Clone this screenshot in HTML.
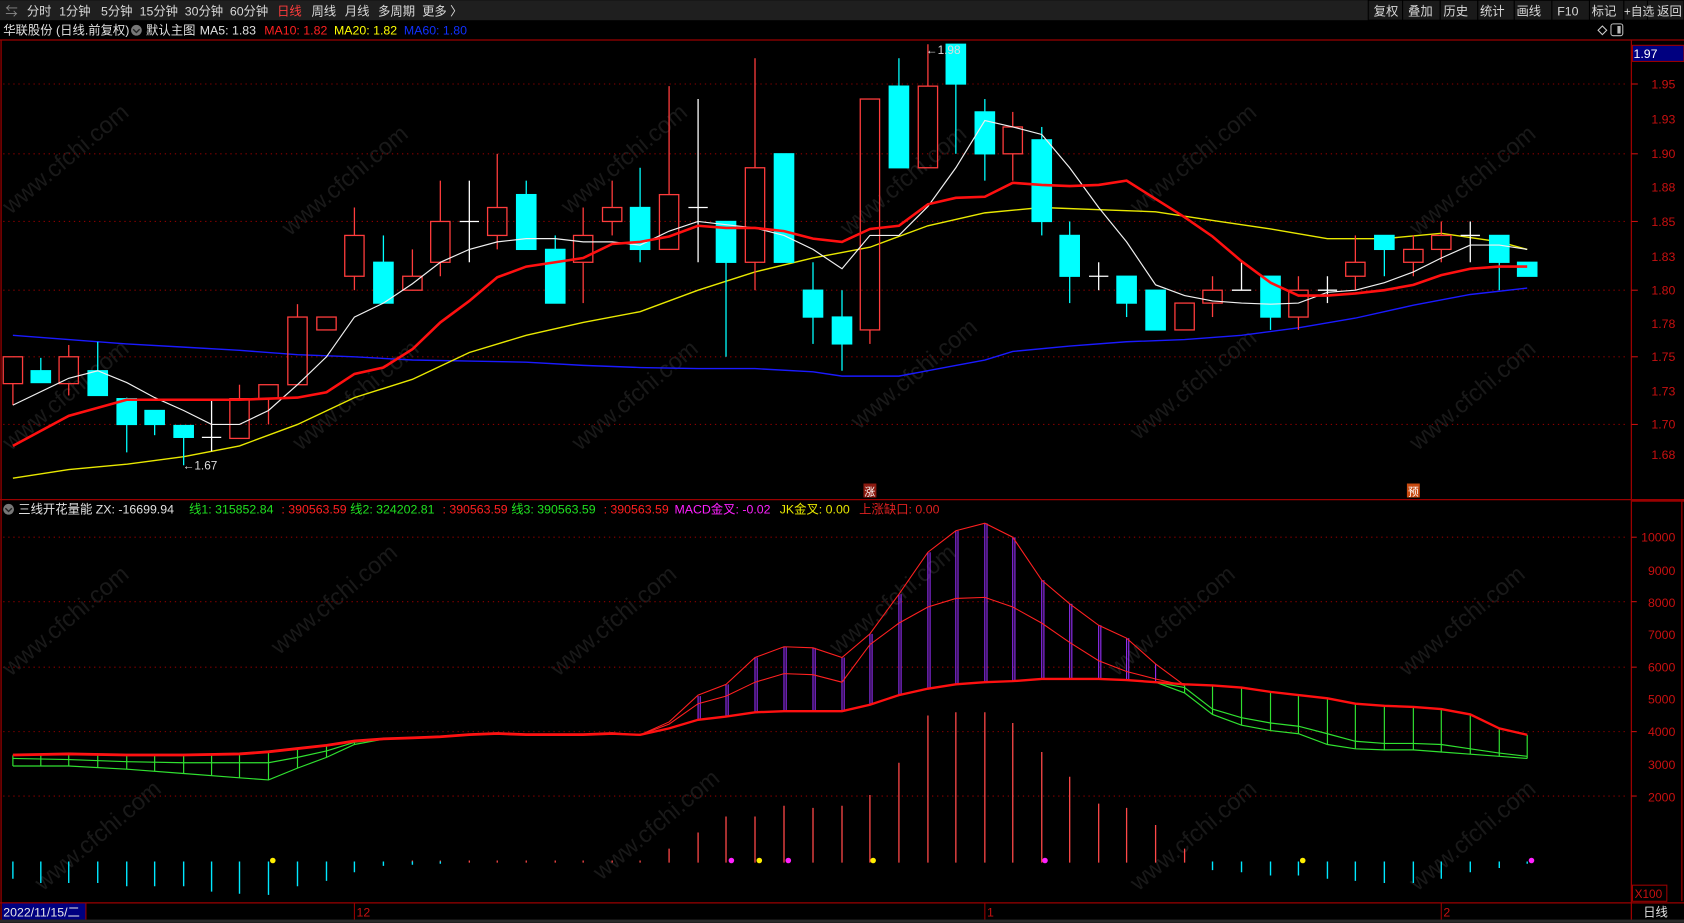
<!DOCTYPE html>
<html><head><meta charset="utf-8"><style>
html,body{margin:0;padding:0;background:#000;width:1684px;height:923px;overflow:hidden}
svg{display:block}
text{font-family:"Liberation Sans","Noto Sans CJK SC",sans-serif}
</style></head><body>
<svg width="1684" height="923" viewBox="0 0 1568 859" xmlns="http://www.w3.org/2000/svg">
<rect width="1568" height="859" fill="#000"/>
<g fill="#191919" font-size="22" font-family="Liberation Sans,sans-serif">
<text transform="translate(10,200) rotate(-40)">www.cfchi.com</text>
<text transform="translate(270,220) rotate(-40)">www.cfchi.com</text>
<text transform="translate(530,200) rotate(-40)">www.cfchi.com</text>
<text transform="translate(790,220) rotate(-40)">www.cfchi.com</text>
<text transform="translate(1060,200) rotate(-40)">www.cfchi.com</text>
<text transform="translate(1320,220) rotate(-40)">www.cfchi.com</text>
<text transform="translate(10,420) rotate(-40)">www.cfchi.com</text>
<text transform="translate(280,420) rotate(-40)">www.cfchi.com</text>
<text transform="translate(540,420) rotate(-40)">www.cfchi.com</text>
<text transform="translate(800,400) rotate(-40)">www.cfchi.com</text>
<text transform="translate(1060,410) rotate(-40)">www.cfchi.com</text>
<text transform="translate(1320,420) rotate(-40)">www.cfchi.com</text>
<text transform="translate(10,630) rotate(-40)">www.cfchi.com</text>
<text transform="translate(260,610) rotate(-40)">www.cfchi.com</text>
<text transform="translate(520,630) rotate(-40)">www.cfchi.com</text>
<text transform="translate(780,610) rotate(-40)">www.cfchi.com</text>
<text transform="translate(1040,630) rotate(-40)">www.cfchi.com</text>
<text transform="translate(1310,630) rotate(-40)">www.cfchi.com</text>
<text transform="translate(40,830) rotate(-40)">www.cfchi.com</text>
<text transform="translate(560,820) rotate(-40)">www.cfchi.com</text>
<text transform="translate(1060,830) rotate(-40)">www.cfchi.com</text>
<text transform="translate(1320,830) rotate(-40)">www.cfchi.com</text>
</g>
<rect x="0" y="0" width="1568" height="18.6" fill="#1f1f1f"/>
<g fill="#d8d8d8" font-size="11.5">
<text x="5" y="14" fill="#888">⇆</text>
<text x="25" y="14">分时</text><text x="55" y="14">1分钟</text><text x="94" y="14">5分钟</text>
<text x="130" y="14">15分钟</text><text x="172" y="14">30分钟</text><text x="214" y="14">60分钟</text>
<text x="258" y="14" fill="#ff3c3c">日线</text><text x="290" y="14">周线</text><text x="321" y="14">月线</text>
<text x="352" y="14">多周期</text><text x="393" y="14">更多 〉</text>
</g>
<g fill="#1a1a1a" stroke="#000" stroke-width="1">
<rect x="1274" y="0" width="32" height="18.6"/><rect x="1306" y="0" width="35" height="18.6"/>
<rect x="1341" y="0" width="35" height="18.6"/><rect x="1376" y="0" width="34" height="18.6"/>
<rect x="1410" y="0" width="35" height="18.6"/><rect x="1445" y="0" width="35" height="18.6"/>
<rect x="1480" y="0" width="32" height="18.6"/><rect x="1512" y="0" width="22" height="18.6"/><rect x="1534" y="0" width="34" height="18.6"/>
</g>
<g fill="#d8d8d8" font-size="11.5">
<text x="1279" y="14">复权</text><text x="1311" y="14">叠加</text><text x="1344" y="14">历史</text>
<text x="1378" y="14">统计</text><text x="1412" y="14">画线</text><text x="1450" y="14">F10</text>
<text x="1482" y="14">标记</text><text x="1512" y="14" font-size="11">+自选</text><text x="1543" y="14">返回</text>
</g>
<g font-size="11.5">
<text x="3" y="32" fill="#e0e0e0">华联股份 (日线.前复权)</text>
<circle cx="127" cy="28" r="5" fill="#777"/><path d="M124 27 L127 30 L130 27" stroke="#222" fill="none" stroke-width="1.3"/>
<text x="136" y="32" fill="#e0e0e0">默认主图</text>
<text x="186" y="32" fill="#e0e0e0">MA5: 1.83</text>
<text x="246" y="32" fill="#ff2020">MA10: 1.82</text>
<text x="311" y="32" fill="#ffff00">MA20: 1.82</text>
<text x="376" y="32" fill="#1030ff">MA60: 1.80</text>
</g>
<path d="M1492 24 L1496 28 L1492 32 L1488 28Z" stroke="#ccc" fill="none"/>
<rect x="1500" y="22" width="11" height="11" rx="2" stroke="#bbb" fill="none"/><rect x="1506" y="24" width="3" height="7" fill="#bbb"/>
<g stroke="#9a0000" stroke-width="1.2" fill="none">
<line x1="0" y1="37" x2="1568" y2="37"/>
<line x1="1519" y1="37" x2="1519" y2="856"/>
<line x1="0" y1="465" x2="1568" y2="465"/>
<line x1="0" y1="840.5" x2="1568" y2="840.5"/>
<line x1="1" y1="37" x2="1" y2="856"/>
<line x1="1519" y1="466" x2="1568" y2="466" stroke-width="2"/>
<line x1="1566" y1="466" x2="1566" y2="839"/>
</g>
<g stroke="#8a0000" stroke-width="1" stroke-dasharray="1.2 3.5">
<line x1="3" y1="78" x2="1516" y2="78"/><line x1="3" y1="143" x2="1516" y2="143"/>
<line x1="3" y1="206" x2="1516" y2="206"/><line x1="3" y1="270" x2="1516" y2="270"/>
<line x1="3" y1="332" x2="1516" y2="332"/><line x1="3" y1="395" x2="1516" y2="395"/>
<line x1="3" y1="500" x2="1516" y2="500"/><line x1="3" y1="560" x2="1516" y2="560"/>
<line x1="3" y1="621" x2="1516" y2="621"/><line x1="3" y1="681" x2="1516" y2="681"/>
<line x1="3" y1="741" x2="1516" y2="741"/>
</g>
<g fill="#c81010" font-size="11.5" text-anchor="end">
<text x="1560" y="82">1.95</text><text x="1560" y="115">1.93</text><text x="1560" y="147">1.90</text>
<text x="1560" y="178">1.88</text><text x="1560" y="210">1.85</text><text x="1560" y="243">1.83</text>
<text x="1560" y="274">1.80</text><text x="1560" y="305">1.78</text><text x="1560" y="336">1.75</text>
<text x="1560" y="368">1.73</text><text x="1560" y="399">1.70</text><text x="1560" y="427">1.68</text>
<text x="1560" y="504">10000</text><text x="1560" y="535">9000</text><text x="1560" y="565">8000</text>
<text x="1560" y="595">7000</text><text x="1560" y="625">6000</text><text x="1560" y="655">5000</text>
<text x="1560" y="685">4000</text><text x="1560" y="716">3000</text><text x="1560" y="746">2000</text>
</g>
<g stroke="#c81010"><line x1="1519" y1="78" x2="1525" y2="78"/><line x1="1519" y1="143" x2="1525" y2="143"/><line x1="1519" y1="206" x2="1525" y2="206"/><line x1="1519" y1="270" x2="1525" y2="270"/><line x1="1519" y1="332" x2="1525" y2="332"/><line x1="1519" y1="395" x2="1525" y2="395"/>
<line x1="1519" y1="500" x2="1524" y2="500"/><line x1="1519" y1="560" x2="1524" y2="560"/><line x1="1519" y1="621" x2="1524" y2="621"/><line x1="1519" y1="681" x2="1524" y2="681"/><line x1="1519" y1="741" x2="1524" y2="741"/></g>
<rect x="1520" y="42" width="48" height="15" fill="#000080" stroke="#9a0000"/>
<text x="1521" y="54" fill="#fff" font-size="11.5">1.97</text>
<polyline fill="none" stroke="#1a1aff" stroke-width="1.3" points="12,312 64,316 118,320 171,323 223,326 277,330 330,332 384,335 437,336 490,337 543,340 596,342 650,343 703,343 757,346 784,350 810,350 837,350 864,345 890,340 917,335 943,327 996,322 1049,318 1103,316 1156,312 1209,305 1262,296 1316,284 1369,274 1422,268"/>
<polyline fill="none" stroke="#e8e800" stroke-width="1.3" points="12,445 64,437 118,432 171,425 223,415 277,395 330,370 384,353 437,328 490,312 543,300 596,290 650,270 703,253 757,240 810,230 864,210 917,198 970,193 1023,195 1076,197 1129,205 1183,213 1236,222 1289,222 1342,217 1396,225 1422,232"/>
<g stroke="#ff3c3c" fill="none" stroke-width="1.2">
<line x1="12" y1="357" x2="12" y2="377"/><rect x="3" y="332" width="18" height="25"/>
<line x1="64" y1="321" x2="64" y2="332"/><line x1="64" y1="357" x2="64" y2="368"/><rect x="55" y="332" width="18" height="25"/>
<line x1="223" y1="358" x2="223" y2="371"/><rect x="214" y="371" width="18" height="37"/>
<line x1="250" y1="371" x2="250" y2="395"/><rect x="241" y="358" width="18" height="13"/>
<line x1="277" y1="283" x2="277" y2="295"/><rect x="268" y="295" width="18" height="63"/>
<rect x="295" y="295" width="18" height="12"/>
<line x1="330" y1="193" x2="330" y2="219"/><line x1="330" y1="257" x2="330" y2="270"/><rect x="321" y="219" width="18" height="38"/>
<line x1="384" y1="232" x2="384" y2="257"/><rect x="375" y="257" width="18" height="13"/>
<line x1="410" y1="168" x2="410" y2="206"/><line x1="410" y1="244" x2="410" y2="257"/><rect x="401" y="206" width="18" height="38"/>
<line x1="463" y1="143" x2="463" y2="193"/><line x1="463" y1="219" x2="463" y2="232"/><rect x="454" y="193" width="18" height="26"/>
<line x1="543" y1="193" x2="543" y2="219"/><line x1="543" y1="244" x2="543" y2="282"/><rect x="534" y="219" width="18" height="25"/>
<line x1="570" y1="168" x2="570" y2="193"/><line x1="570" y1="206" x2="570" y2="219"/><rect x="561" y="193" width="18" height="13"/>
<line x1="623" y1="80" x2="623" y2="181"/><rect x="614" y="181" width="18" height="51"/>
<line x1="703" y1="54" x2="703" y2="156"/><line x1="703" y1="244" x2="703" y2="270"/><rect x="694" y="156" width="18" height="88"/>
<line x1="810" y1="307" x2="810" y2="320"/><rect x="801" y="92" width="18" height="215"/>
<line x1="864" y1="41" x2="864" y2="80"/><rect x="855" y="80" width="18" height="76"/>
<line x1="943" y1="104" x2="943" y2="118"/><line x1="943" y1="143" x2="943" y2="168"/><rect x="934" y="118" width="18" height="25"/>
<rect x="1094" y="282" width="18" height="25"/>
<line x1="1129" y1="257" x2="1129" y2="270"/><line x1="1129" y1="282" x2="1129" y2="295"/><rect x="1120" y="270" width="18" height="12"/>
<line x1="1209" y1="257" x2="1209" y2="270"/><line x1="1209" y1="295" x2="1209" y2="307"/><rect x="1200" y="270" width="18" height="25"/>
<line x1="1262" y1="219" x2="1262" y2="244"/><line x1="1262" y1="257" x2="1262" y2="270"/><rect x="1253" y="244" width="18" height="13"/>
<line x1="1316" y1="219" x2="1316" y2="232"/><line x1="1316" y1="244" x2="1316" y2="257"/><rect x="1307" y="232" width="18" height="12"/>
<line x1="1342" y1="206" x2="1342" y2="219"/><line x1="1342" y1="232" x2="1342" y2="244"/><rect x="1333" y="219" width="18" height="13"/>
</g>
<g stroke="#00ffff" fill="#00ffff" stroke-width="1.2">
<line x1="38" y1="333" x2="38" y2="356"/><rect x="29" y="345" width="18" height="11"/>
<line x1="91" y1="318" x2="91" y2="368"/><rect x="82" y="345" width="18" height="23"/>
<line x1="118" y1="370" x2="118" y2="421"/><rect x="109" y="371" width="18" height="24"/>
<line x1="144" y1="385" x2="144" y2="405"/><rect x="135" y="382" width="18" height="13"/>
<line x1="171" y1="396" x2="171" y2="433"/><rect x="162" y="396" width="18" height="11"/>
<line x1="357" y1="219" x2="357" y2="282"/><rect x="348" y="244" width="18" height="38"/>
<line x1="490" y1="168" x2="490" y2="232"/><rect x="481" y="181" width="18" height="51"/>
<line x1="517" y1="219" x2="517" y2="282"/><rect x="508" y="232" width="18" height="50"/>
<line x1="596" y1="156" x2="596" y2="244"/><rect x="587" y="193" width="18" height="39"/>
<line x1="676" y1="206" x2="676" y2="332"/><rect x="667" y="206" width="18" height="38"/>
<line x1="730" y1="143" x2="730" y2="244"/><rect x="721" y="143" width="18" height="101"/>
<line x1="757" y1="244" x2="757" y2="320"/><rect x="748" y="270" width="18" height="25"/>
<line x1="784" y1="270" x2="784" y2="345"/><rect x="775" y="295" width="18" height="25"/>
<line x1="837" y1="54" x2="837" y2="156"/><rect x="828" y="80" width="18" height="76"/>
<line x1="890" y1="41" x2="890" y2="143"/><rect x="881" y="41" width="18" height="37"/>
<line x1="917" y1="92" x2="917" y2="168"/><rect x="908" y="104" width="18" height="39"/>
<line x1="970" y1="118" x2="970" y2="219"/><rect x="961" y="130" width="18" height="76"/>
<line x1="996" y1="206" x2="996" y2="282"/><rect x="987" y="219" width="18" height="38"/>
<line x1="1049" y1="257" x2="1049" y2="295"/><rect x="1040" y="257" width="18" height="25"/>
<rect x="1067" y="270" width="18" height="37"/>
<line x1="1183" y1="257" x2="1183" y2="307"/><rect x="1174" y="257" width="18" height="38"/>
<line x1="1289" y1="219" x2="1289" y2="257"/><rect x="1280" y="219" width="18" height="13"/>
<line x1="1396" y1="219" x2="1396" y2="270"/><rect x="1387" y="219" width="18" height="25"/>
<rect x="1413" y="244" width="18" height="13"/>
</g>
<g stroke="#fff" stroke-width="1.2">
<line x1="197" y1="371" x2="197" y2="420"/><line x1="188" y1="407" x2="206" y2="407"/>
<line x1="437" y1="168" x2="437" y2="244"/><line x1="428" y1="206" x2="446" y2="206"/>
<line x1="650" y1="92" x2="650" y2="244"/><line x1="641" y1="193" x2="659" y2="193"/>
<line x1="1023" y1="244" x2="1023" y2="270"/><line x1="1014" y1="257" x2="1032" y2="257"/>
<line x1="1156" y1="244" x2="1156" y2="270"/><line x1="1147" y1="270" x2="1165" y2="270"/>
<line x1="1236" y1="257" x2="1236" y2="282"/><line x1="1227" y1="270" x2="1245" y2="270"/>
<line x1="1369" y1="206" x2="1369" y2="244"/><line x1="1360" y1="219" x2="1378" y2="219"/>
</g>
<polyline fill="none" stroke="#f0f0f0" stroke-width="1.1" points="12,377 64,352 91,345 118,356 144,370 171,382 197,395 223,395 250,382 277,358 304,332 330,295 357,282 384,264 410,244 437,232 463,225 490,222 517,222 543,225 570,225 596,228 623,215 650,206 676,209 703,212 730,219 757,232 784,250 810,219 837,219 864,192 890,156 917,112 943,118 970,125 996,156 1023,193 1049,225 1076,265 1103,275 1129,280 1156,282 1183,283 1209,282 1236,272 1262,270 1289,263 1316,253 1342,240 1369,228 1396,228 1422,232"/>
<polyline fill="none" stroke="#ff1010" stroke-width="2.4" points="12,415 64,387 118,372 171,372 223,372 277,370 304,365 330,348 357,342 384,325 410,300 437,280 463,258 490,248 517,244 543,240 570,227 596,225 623,220 650,210 676,212 703,212 730,215 757,222 784,225 810,213 837,210 864,190 890,184 917,183 943,170 970,172 996,173 1023,172 1049,168 1076,185 1103,202 1129,220 1156,243 1183,263 1209,275 1236,275 1262,273 1289,270 1316,265 1342,256 1369,250 1396,248 1422,248"/>
<g fill="#ddd" font-size="11"><text x="170" y="437">←1.67</text><text x="862" y="50">←1.98</text></g>
<rect x="804" y="450" width="12" height="13" fill="#8b1a10"/><text x="805" y="461" fill="#fff" font-size="10">涨</text>
<rect x="1310" y="450" width="12" height="13" fill="#c84a10"/><text x="1311" y="461" fill="#fff" font-size="10">预</text>
<g font-size="11.5">
<circle cx="8" cy="474" r="5" fill="#777"/><path d="M5 473 L8 476 L11 473" stroke="#222" fill="none" stroke-width="1.3"/>
<text x="17" y="478" fill="#e0e0e0">三线开花量能 ZX: -16699.94</text>
<text x="176" y="478" fill="#20e020">线1: 315852.84</text><text x="262" y="478" fill="#ff2020">: 390563.59</text>
<text x="326" y="478" fill="#20e020">线2: 324202.81</text><text x="412" y="478" fill="#ff2020">: 390563.59</text>
<text x="476" y="478" fill="#20e020">线3: 390563.59</text><text x="562" y="478" fill="#ff2020">: 390563.59</text>
<text x="628" y="478" fill="#ff20ff">MACD金叉: -0.02</text>
<text x="726" y="478" fill="#e8e800">JK金叉: 0.00</text>
<text x="800" y="478" fill="#e02020">上涨缺口: 0.00</text>
</g>
<g stroke="#30e030" fill="none" stroke-width="1.1">
<polyline points="12,713 64,713 118,716 171,720 223,724 250,726 277,715 304,705 330,693 357,688"/>
<polyline points="12,706 64,707 118,709 171,710 223,710 250,710 277,705 304,699 330,691 357,688"/>
<polyline points="1076,635 1103,645 1129,665 1156,675 1183,680 1209,683 1236,693 1262,697 1289,698 1316,698 1342,700 1369,702 1396,704 1422,706"/>
<polyline points="1076,635 1103,640 1129,660 1156,668 1183,673 1209,676 1236,683 1262,690 1289,692 1316,692 1342,693 1369,697 1396,701 1422,704"/>
<path d="M12 703V713M38 703V713M64 702V713M91 702V714M118 703V716M144 703V718M171 703V720M197 703V722M223 702V724M250 700V726M277 697V715M304 694V705M330 690V693M1103 637V645M1129 638V665M1156 640V675M1183 644V680M1209 647V683M1236 650V693M1262 655V697M1289 657V698M1316 658V698M1342 660V700M1369 665V702M1396 678V704M1422 684V706"/>
</g>
<g stroke="#9a30ff" stroke-width="1" fill="none">
<path d="M650 648V670M652 648V670M676 637V667M678 637V667M703 612V663M705 612V663M730 602V662M732 602V662M757 603V662M759 603V662M784 612V662M786 612V662M810 590V656M812 590V656M837 553V647M839 553V647M864 514V641M866 514V641M890 494V637M892 494V637M917 487V635M919 487V635M943 500V634M945 500V634M970 540V632M972 540V632M996 562V632M998 562V632M1023 582V632M1025 582V632M1049 594V633M1051 594V633M1076 618V635"/>
</g>
<polyline fill="none" stroke="#ff2020" stroke-width="1" points="12,702 64,701 118,702 171,702 223,701 250,699 277,696 304,693 330,689 357,687 384,686 410,685 437,683 463,682 490,683 517,683 543,683 570,682 596,684 623,672 650,647 676,637 703,612 730,602 757,603 784,612 810,590 837,553 864,514 890,494 917,487 943,500 970,540 996,562 1023,582 1049,594 1076,618 1103,638"/>
<polyline fill="none" stroke="#ff2020" stroke-width="1" points="596,684 623,674 650,655 676,648 703,635 730,627 757,628 784,635 810,600 837,580 864,565 890,557 917,556 943,565 970,580 996,598 1023,615 1049,625 1076,632 1103,638"/>
<polyline fill="none" stroke="#ff1010" stroke-width="2.2" points="12,703 64,702 118,703 171,703 223,702 250,700 277,697 304,694 330,690 357,688 384,687 410,686 437,684 463,683 490,684 517,684 543,684 570,683 596,684 623,678 650,670 676,667 703,663 730,662 757,662 784,662 810,656 837,647 864,641 890,637 917,635 943,634 970,632 996,632 1023,632 1049,633 1076,635 1103,637 1129,638 1156,640 1183,644 1209,647 1236,650 1262,655 1289,657 1316,658 1342,660 1369,665 1396,678 1422,684"/>
<g stroke="#ff4848" stroke-width="1.2">
<path d="M623 790V803M650 775V803M676 760V803M703 760V803M730 750V803M757 752V803M784 750V803M810 740V803M837 710V803M864 666V803M890 663V803M917 663V803M943 673V803M970 700V803M996 723V803M1023 748V803M1049 752V803M1076 768V803M1103 790V803M384 801V803M410 801V803M437 801V803M463 801V803M490 801V803M517 801V803M543 801V803M570 801V803M596 801V803"/>
</g>
<g stroke="#00e8ff" stroke-width="1.3">
<path d="M12 802V818M38 802V822M64 802V822M91 802V822M118 802V825M144 802V825M171 802V825M197 802V830M223 802V832M250 802V833M277 802V825M304 802V820M330 802V812M357 802V806M384 802V805M410 802V804M1129 802V810M1156 802V812M1183 802V815M1209 802V815M1236 802V818M1262 802V820M1289 802V822M1316 802V822M1342 802V818M1369 802V812M1396 802V808M1422 802V804"/>
</g>
<g><circle cx="254" cy="801" r="2.6" fill="#ffee00"/><circle cx="707" cy="801" r="2.6" fill="#ffee00"/><circle cx="813" cy="801" r="2.6" fill="#ffee00"/><circle cx="1213" cy="801" r="2.6" fill="#ffee00"/>
<circle cx="681" cy="801" r="2.6" fill="#ff20ff"/><circle cx="734" cy="801" r="2.6" fill="#ff20ff"/><circle cx="973" cy="801" r="2.6" fill="#ff20ff"/><circle cx="1426" cy="801" r="2.6" fill="#ff20ff"/></g>
<rect x="1520" y="824" width="32" height="15" fill="none" stroke="#9a0000"/>
<text x="1522" y="836" fill="#c81010" font-size="11">X100</text>
<rect x="2" y="841" width="78" height="15" fill="#000080"/>
<text x="3" y="853" fill="#e8e8e8" font-size="11.5">2022/11/15/二</text>
<g stroke="#9a0000"><line x1="80" y1="841" x2="80" y2="856"/><line x1="330" y1="841" x2="330" y2="856"/><line x1="917" y1="841" x2="917" y2="856"/><line x1="1342" y1="841" x2="1342" y2="856"/></g>
<g fill="#c81010" font-size="11.5"><text x="332" y="853">12</text><text x="919" y="853">1</text><text x="1344" y="853">2</text></g>
<text x="1530" y="853" fill="#e0e0e0" font-size="11.5">日线</text>
<rect x="0" y="856" width="1568" height="3" fill="#2a2a2a"/>
</svg>
</body></html>
